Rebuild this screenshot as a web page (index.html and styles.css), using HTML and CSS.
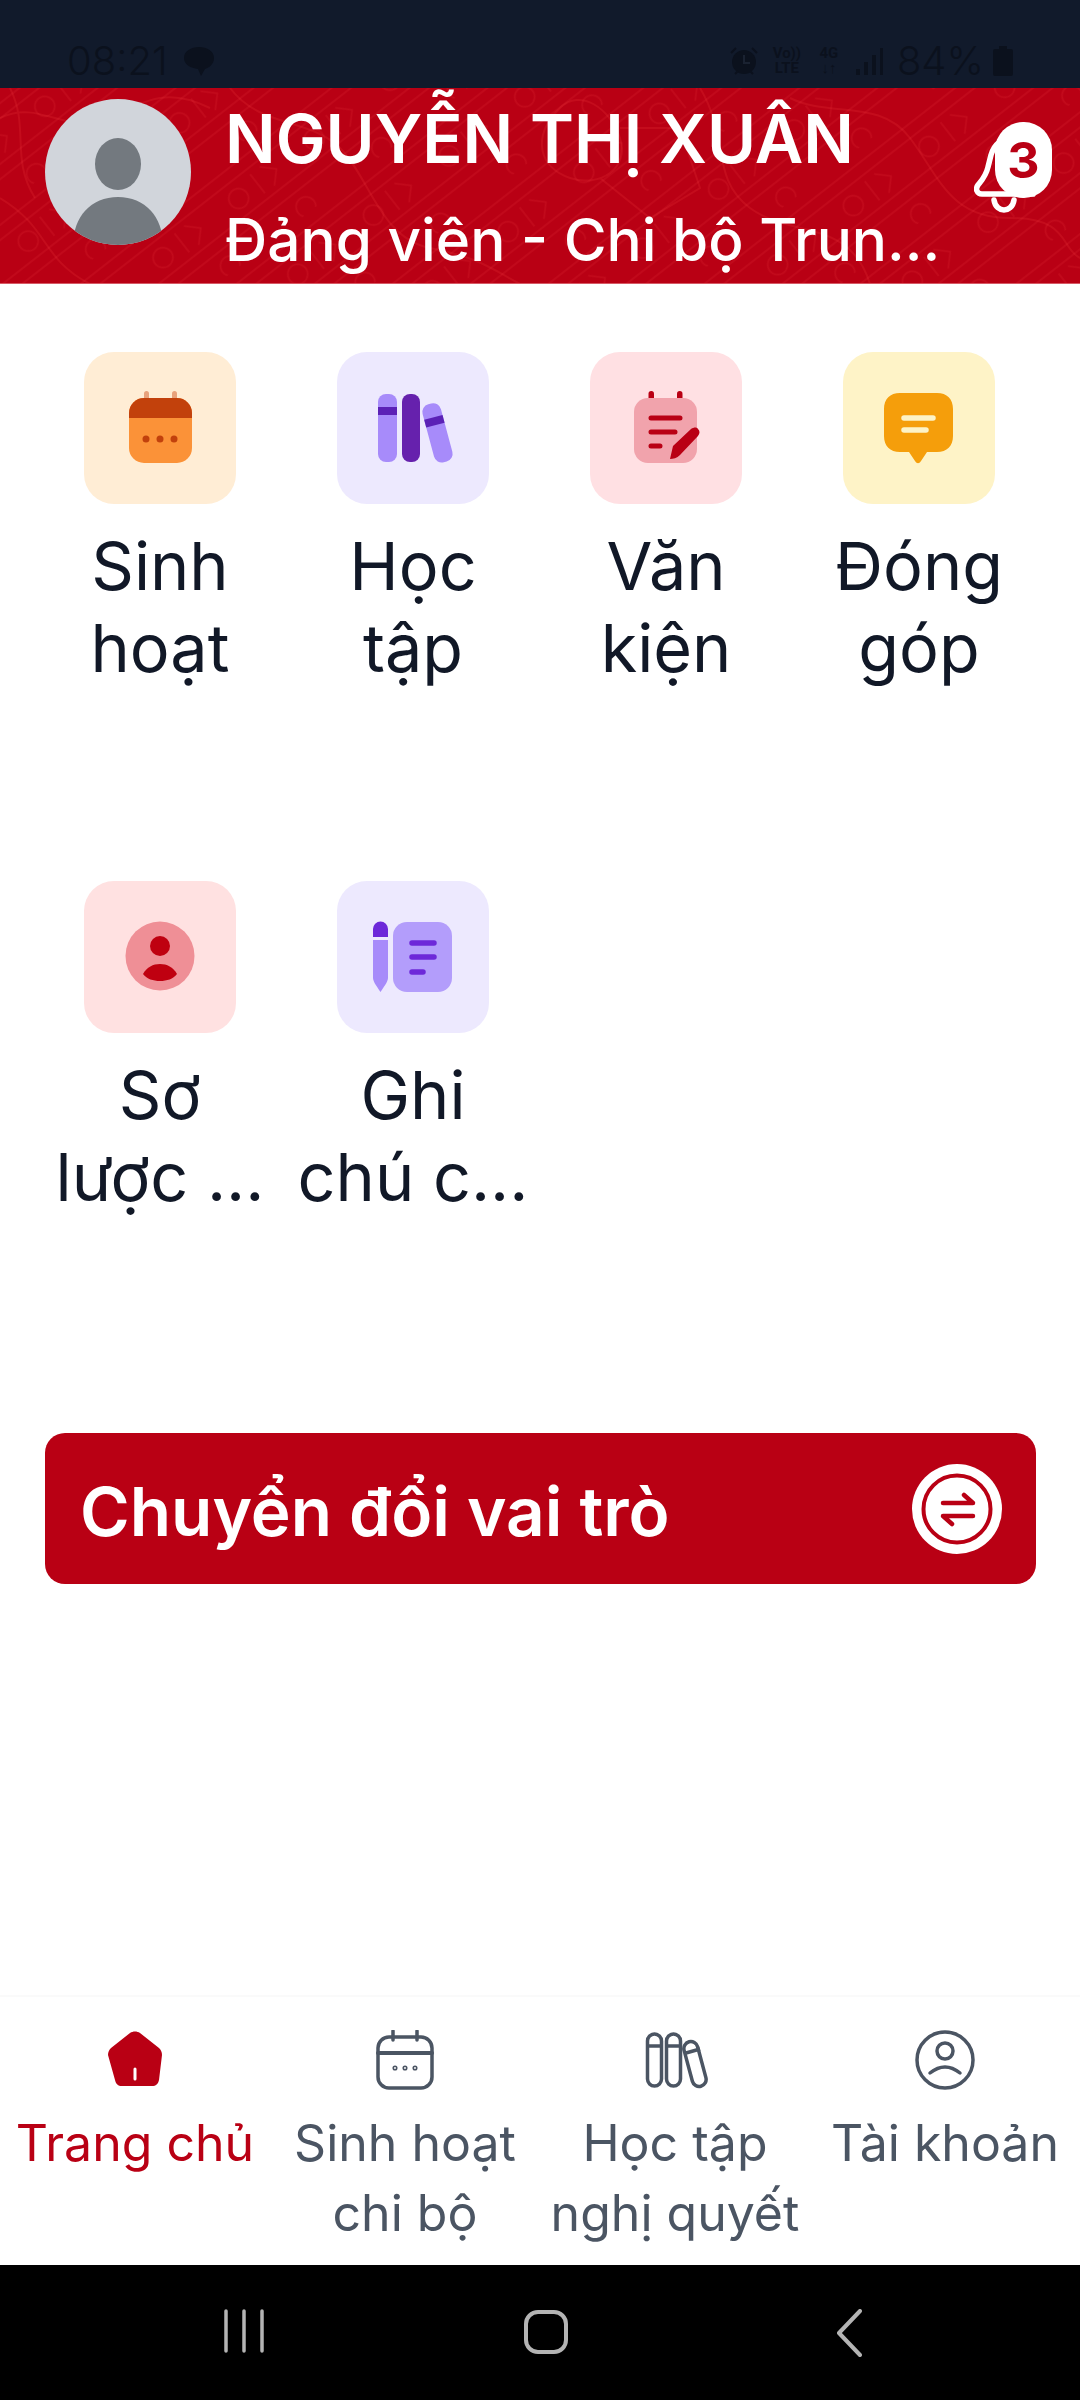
FILE: index.html
```html
<!DOCTYPE html>
<html lang="vi">
<head>
    <meta charset="UTF-8">
    <meta name="viewport" content="width=device-width, initial-scale=1.0">
    <title>Trang chủ</title>
    <link rel="stylesheet" href="styles.css">
</head>
<body>
<div class="screen">
    <div class="status-bar">
        <div class="status-left">
            <span class="status-text">08:21</span>
            <svg class="chat-dot" width="30" height="30" viewBox="0 0 30 30"><path d="M15 1c8 0 15 4 15 11s-6 10-9 11l-4 7-3-7C7 22 0 19 0 12S7 1 15 1z"/></svg>
        </div>
        <div class="status-right">
            <svg width="28" height="28" viewBox="0 0 28 28"><circle cx="14" cy="15" r="12"/><path d="M1 6l5-5M27 6l-5-5M5 27l3-3M23 27l-3-3" stroke="#0b111d" stroke-width="2" fill="none"/><path d="M14 8v8h6" stroke="#1a2231" stroke-width="2" fill="none"/></svg>
            <div class="net-mini"><span>Vo))</span><span>LTE</span></div>
            <div class="net-mini narrow"><span>4G</span><span>↓↑</span></div>
            <svg width="27" height="28" viewBox="0 0 27 28"><rect x="0" y="22" width="4" height="6"/><rect x="8" y="15" width="4" height="13"/><rect x="16" y="8" width="4" height="20"/><rect x="24" y="1" width="3" height="27"/></svg>
            <span class="status-text">84%</span>
            <svg class="batt" width="20" height="30" viewBox="0 0 20 30"><path d="M6 0h8v3h4a2 2 0 012 2v23a2 2 0 01-2 2H2a2 2 0 01-2-2V5a2 2 0 012-2h4z"/></svg>
        </div>
    </div>

    <header class="profile">
        <svg class="pattern" width="1080" height="196" viewBox="0 0 1080 196" fill="none">
            <defs>
                <pattern id="paperLines" width="96" height="96" patternUnits="userSpaceOnUse" patternTransform="rotate(-38)">
                    <g stroke="#ff4a4a" stroke-opacity=".15" stroke-width="1.500">
                        <path d="M0 12h96M0 24h96M0 60h96M0 72h96"/>
                        <circle cx="24" cy="42" r="10"/><circle cx="72" cy="90" r="10"/>
                        <path d="M48 30v24M60 30l12 12-12 12"/>
                    </g>
                </pattern>
            </defs>
            <rect width="1080" height="196" fill="url(#paperLines)"/>
            <g stroke="#ff4a4a" stroke-opacity=".16" stroke-width="2">
                <path d="M0 30c40-20 70 20 110 0s60-30 100-10M0 110c50 30 40 60 90 86M10 0c20 40 0 70 25 110"/>
                <path d="M230 0c30 40 80 30 110 60s40 90 90 100 60 20 90 36"/>
                <path d="M560 20c-30 30-20 60 10 70s60-10 50-40-40-50-60-30zM600 90l50 40 50-30-20-60-60 0"/>
                <path d="M700 0c30 50 10 90 50 120s100 10 120 76M790 10c40 20 90 0 120 40s40 80 100 80 50 30 70 40"/>
            </g>
        </svg>
        <svg class="avatar" width="146" height="146" viewBox="0 0 146 146">
            <clipPath id="avatarClip"><circle cx="73" cy="73" r="73"/></clipPath>
            <circle cx="73" cy="73" r="73" fill="#d1d5db"/>
            <g clip-path="url(#avatarClip)" fill="#73797f">
                <ellipse cx="73" cy="65" rx="23" ry="26"/>
                <path d="M28 146c0-28 18-48 45-48s45 20 45 48z"/>
            </g>
        </svg>
        <div class="profile-text">
            <div class="profile-name">NGUYỄN THỊ XUÂN</div>
            <div class="profile-role">Đảng viên - Chi bộ Trun...</div>
        </div>
        <div class="bell">
            <svg width="62" height="100" viewBox="0 0 62 100" fill="none" stroke="#fff" stroke-width="5.500" stroke-linecap="round" stroke-linejoin="round">
                <path d="M8 78c-5 0-7-5-4-9 4-5 8-9 10-18l3-12c3-10 10-16 20-16s18 8 20 18l2 37z"/>
                <path d="M20 84c1 7 6 10 10 10s9-3 10-10"/>
            </svg>
            <span class="bell-badge">3</span>
        </div>
    </header>

    <main class="content">
        <div class="menu-grid">
            <div class="menu-item">
                <div class="tile tile-orange">
                    <svg width="152" height="152" viewBox="0 0 152 152">
                        <rect x="60" y="39" width="5" height="12" rx="2.500" fill="#e8a27c"/>
                        <rect x="88" y="39" width="5" height="12" rx="2.500" fill="#e8a27c"/>
                        <rect x="45" y="46" width="63" height="65" rx="15" fill="#fb9238"/>
                        <path d="M45 66v-5a15 15 0 0115-15h33a15 15 0 0115 15v5z" fill="#c2410c"/>
                        <circle cx="62" cy="87" r="3.500" fill="#c2410c"/><circle cx="76" cy="87" r="3.500" fill="#c2410c"/><circle cx="90" cy="87" r="3.500" fill="#c2410c"/>
                    </svg>
                </div>
                <div class="menu-label">Sinh<br>hoạt</div>
            </div>
            <div class="menu-item">
                <div class="tile tile-violet">
                    <svg width="152" height="152" viewBox="0 0 152 152">
                        <rect x="41" y="42" width="19" height="68" rx="8" fill="#a78bfa"/>
                        <rect x="41" y="55" width="19" height="8" fill="#5b21b6"/>
                        <rect x="65" y="42" width="18" height="68" rx="8" fill="#6621ad"/>
                        <g transform="rotate(-15 100 81)">
                            <rect x="91" y="51" width="19" height="60" rx="8" fill="#a78bfa"/>
                            <rect x="91" y="65" width="19" height="8" fill="#5b21b6"/>
                        </g>
                    </svg>
                </div>
                <div class="menu-label">Học<br>tập</div>
            </div>
            <div class="menu-item">
                <div class="tile tile-pink">
                    <svg width="152" height="152" viewBox="0 0 152 152">
                        <rect x="58.500" y="39" width="5.500" height="12" rx="2.700" fill="#b90014"/>
                        <rect x="87" y="39" width="5.500" height="12" rx="2.700" fill="#b90014"/>
                        <rect x="44" y="46" width="63" height="65" rx="14" fill="#f1a3ac"/>
                        <path d="M61 66h29M61 80h24M61 94h9" stroke="#b90014" stroke-width="5" stroke-linecap="round"/>
                        <path d="M80 107l3-13 18-17c3-2 6-2 7 0 2 2 2 4 0 7L90 103c-3 3-7 4-10 4z" fill="#b90014"/>
                    </svg>
                </div>
                <div class="menu-label">Văn<br>kiện</div>
            </div>
            <div class="menu-item">
                <div class="tile tile-yellow">
                    <svg width="152" height="152" viewBox="0 0 152 152">
                        <path d="M57 41h37c10 0 16 6 16 16v27c0 10-6 16-16 16H84l-6 9c-2 3-4 3-6 0l-6-9h-9c-10 0-16-6-16-16V57c0-10 6-16 16-16z" fill="#f59e0b"/>
                        <path d="M61 66h29M61 78h22" stroke="#fdf3c7" stroke-width="5.500" stroke-linecap="round"/>
                    </svg>
                </div>
                <div class="menu-label">Đóng<br>góp</div>
            </div>
            <div class="menu-item">
                <div class="tile tile-rose">
                    <svg width="152" height="152" viewBox="0 0 152 152">
                        <circle cx="76" cy="75" r="34.500" fill="#ef8f96"/>
                        <circle cx="76" cy="65" r="10" fill="#bf0010"/>
                        <path d="M59 93c4-7 10-10 17-10s13 3 17 10c-4 5-10 7-17 7s-13-2-17-7z" fill="#bf0010"/>
                    </svg>
                </div>
                <div class="menu-label">Sơ<br>lược ...</div>
            </div>
            <div class="menu-item">
                <div class="tile tile-violet">
                    <svg width="152" height="152" viewBox="0 0 152 152">
                        <path d="M36 56V48a7.500 7.500 0 0115 0v8z" fill="#6d28d9"/>
                        <path d="M36 59h15v38c0 4-5 10-7.500 14-2.500-4-7.500-10-7.500-14z" fill="#a78bfa"/>
                        <rect x="56" y="41" width="59" height="70" rx="14" fill="#b39dfb"/>
                        <path d="M75 62h22M75 76h22M75 91h11" stroke="#6d28d9" stroke-width="5.500" stroke-linecap="round"/>
                    </svg>
                </div>
                <div class="menu-label">Ghi<br>chú c...</div>
            </div>
        </div>

        <div class="role-btn">
            <span>Chuyển đổi vai trò</span>
            <svg width="90" height="90" viewBox="0 0 90 90" fill="none">
                <circle cx="45" cy="45" r="45" fill="#fff"/>
                <circle cx="45" cy="45" r="33.500" stroke="#b90014" stroke-width="4"/>
                <path d="M31 39h30l-9-8M61 52H31l9 8" stroke="#b90014" stroke-width="4.500" stroke-linecap="round" stroke-linejoin="round"/>
            </svg>
        </div>
    </main>

    <nav class="tabbar">
        <div class="tab tab-active">
            <svg width="60" height="60" viewBox="0 0 60 60">
                <path d="M25 4c3-2 7-2 10 0l19 15c2 2 3 4 3 7l-3 25c-1 4-3 6-7 6H17c-4 0-6-2-7-6L3 26c0-3 1-5 3-7z" fill="#b90014" transform="translate(0 -1)"/>
                <path d="M30 39v10" stroke="#fff" stroke-width="3" stroke-linecap="round"/>
            </svg>
            <div class="tab-label">Trang chủ</div>
        </div>
        <div class="tab">
            <svg width="60" height="60" viewBox="0 0 60 60" fill="none" stroke="#4b5563" stroke-width="3.500" stroke-linecap="round">
                <rect x="3" y="7" width="54" height="51" rx="11"/>
                <path d="M18 1v9M42 1v9"/>
                <path d="M3 23h54" stroke-width="4"/>
                <circle cx="20" cy="38" r=".8"/><circle cx="30" cy="38" r=".8"/><circle cx="40" cy="38" r=".8"/>
            </svg>
            <div class="tab-label">Sinh hoạt<br>chi bộ</div>
        </div>
        <div class="tab">
            <svg width="66" height="60" viewBox="0 0 66 60" fill="none" stroke="#4b5563" stroke-width="3.500">
                <rect x="5.500" y="4" width="14" height="52" rx="7"/>
                <rect x="24.500" y="4" width="14" height="52" rx="7"/>
                <g transform="rotate(-15 53 34)">
                    <rect x="46" y="11" width="14" height="46" rx="7"/>
                </g>
                <path d="M5.500 16h14M24.500 16h14M44 23l14-4"/>
            </svg>
            <div class="tab-label">Học tập<br>nghị quyết</div>
        </div>
        <div class="tab">
            <svg width="62" height="60" viewBox="0 0 62 60" fill="none" stroke="#4b5563" stroke-width="3.500" stroke-linecap="round">
                <circle cx="31" cy="30" r="28"/>
                <circle cx="31" cy="21" r="8"/>
                <path d="M16 43Q31 31 46 43"/>
            </svg>
            <div class="tab-label">Tài khoản</div>
        </div>
    </nav>

    <div class="nav-bar">
        <svg width="42" height="44" viewBox="0 0 42 44" stroke="#b4b4b4" stroke-width="3.500" stroke-linecap="round"><path d="M3 2v40M21 2v40M39 2v40"/></svg>
        <svg width="44" height="46" viewBox="0 0 44 46" fill="none" stroke="#b4b4b4" stroke-width="4"><rect x="2" y="3" width="40" height="40" rx="12"/></svg>
        <svg width="26" height="48" viewBox="0 0 26 48" fill="none" stroke="#b4b4b4" stroke-width="4" stroke-linecap="round" stroke-linejoin="round"><path d="M24 2L3 24l21 22"/></svg>
    </div>
</div>
</body>
</html>
```

FILE: styles.css
```css
* {
    box-sizing: border-box;
}
body {
    margin: 0;
    background: #fff;
    font-family: Inter, "Noto Sans", sans-serif;
}
.screen {
    width: 1080px;
    height: 2400px;
    display: flex;
    flex-direction: column;
    overflow: hidden;
}
.status-bar {
    height: 88px;
    flex: none;
    background: #111a2b;
    display: flex;
    justify-content: space-between;
    align-items: flex-start;
    padding: 45px 67px 0 67px;
    fill: #0b111d;
    color: #0b111d;
}
.status-left, .status-right {
    display: flex;
    align-items: center;
}
.status-left {
    gap: 16px;
}
.status-right {
    gap: 14px;
}
.status-text {
    font-family: Inter, sans-serif;
    font-size: 40px;
    font-weight: 300;
    line-height: 32px;
}
.batt {
    margin-left: -5px;
}
.net-mini {
    display: flex;
    flex-direction: column;
    font-family: Roboto, sans-serif;
    font-size: 15px;
    font-weight: 700;
    line-height: 15px;
    text-align: center;
    width: 30px;
    white-space: nowrap;
}
.net-mini.narrow {
    width: 26px;
}
.profile {
    position: relative;
    height: 196px;
    flex: none;
    background: #b90014;
    border-bottom: 1px solid #d65a66;
    display: flex;
    align-items: flex-start;
    padding: 11px 0 0 45px;
}
.pattern {
    position: absolute;
    left: 0;
    top: 0;
}
.avatar {
    position: relative;
    flex: none;
}
.profile-text {
    position: relative;
    margin-left: 34px;
    color: #fff;
    white-space: nowrap;
}
.profile-name {
    font-size: 66.700px;
    font-weight: 600;
    line-height: 80px;
}
.profile-role {
    margin-top: 27px;
    font-size: 58.500px;
    font-weight: 500;
    line-height: 68px;
}
.bell {
    position: absolute;
    left: 974px;
    top: 28px;
    width: 62px;
    height: 100px;
}
.bell svg {
    display: block;
}
.bell-badge {
    position: absolute;
    left: 21px;
    top: 6px;
    width: 57px;
    height: 76px;
    border-radius: 28px;
    background: #fff;
    color: #b90014;
    font-size: 50px;
    font-weight: 700;
    line-height: 76px;
    text-align: center;
}
.content {
    flex: 1;
    padding: 68px 33px 0 33.500px;
}
.menu-grid {
    display: grid;
    grid-template-columns: repeat(4, 253px);
    grid-auto-rows: 529px;
}
.menu-item {
    display: flex;
    flex-direction: column;
    align-items: center;
}
.tile {
    width: 152px;
    height: 152px;
    border-radius: 30px;
}
.tile svg {
    display: block;
}
.tile-orange { background: #ffedd5; }
.tile-violet { background: #ede9fe; }
.tile-pink { background: #ffe0e3; }
.tile-yellow { background: #fef3c7; }
.tile-rose { background: #ffe1e1; }
.menu-label {
    width: 253px;
    margin-top: 21px;
    font-size: 66.500px;
    line-height: 82px;
    text-align: center;
    color: #111827;
}
.role-btn {
    width: 991px;
    height: 151px;
    margin: 23px 0 0 11.500px;
    padding: 6px 34px 0 35px;
    border-radius: 20px;
    background: #b90014;
    color: #fff;
    font-size: 67.500px;
    font-weight: 600;
    display: flex;
    justify-content: space-between;
    align-items: center;
}
.role-btn svg {
    margin-top: -6px;
}
.tabbar {
    height: 270px;
    flex: none;
    padding-top: 33px;
    border-top: 2px solid #fafafa;
    display: grid;
    grid-template-columns: repeat(4, 270px);
}
.tab {
    display: flex;
    flex-direction: column;
    align-items: center;
    color: #4b5563;
}
.tab svg {
    display: block;
    flex: none;
}
.tab-active {
    color: #b90014;
}
.tab-label {
    margin-top: 18px;
    font-size: 50px;
    line-height: 70px;
    text-align: center;
}
.nav-bar {
    height: 135px;
    flex: none;
    background: #000;
    display: grid;
    grid-template-columns: 223px 42px 259px 44px 268px 26px;
    align-items: start;
    padding-top: 44px;
}
.nav-bar svg:nth-child(1) { grid-column: 2; }
.nav-bar svg:nth-child(2) { grid-column: 4; }
.nav-bar svg:nth-child(3) { grid-column: 6; }
```
